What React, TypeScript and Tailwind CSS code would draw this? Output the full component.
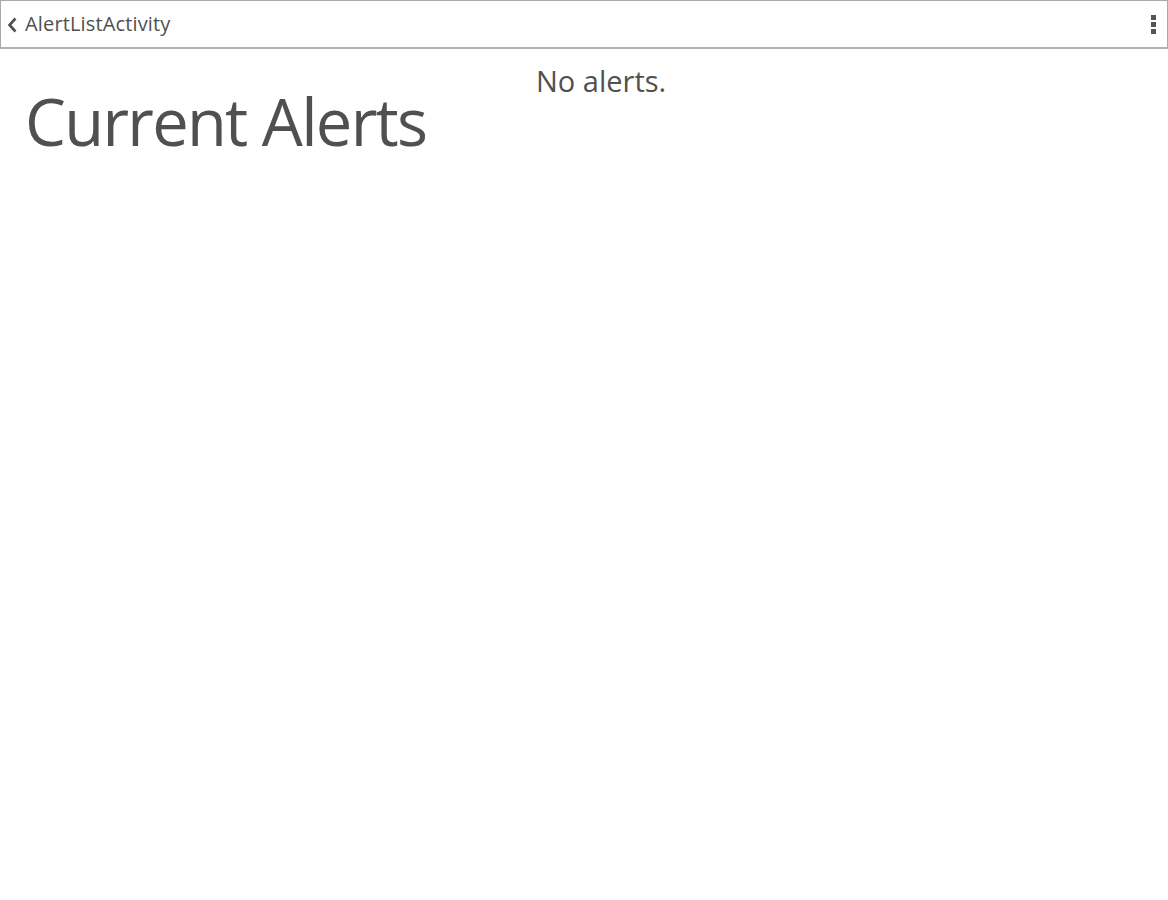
export default function App() {
  return (
    <div
      className="w-[1168px] h-[900px] bg-white text-[#505050] overflow-hidden"
      style={{ fontFamily: '"Open Sans", "Noto Sans", sans-serif' }}
    >
      {/* Action bar */}
      <header className="h-[49px] border border-[#a8a8a8] border-b-2 border-b-[#b0b0b0] flex items-center justify-between pl-[6px] pr-[11px]">
        <div className="flex items-center gap-[7px]">
          <svg width="11" height="16" viewBox="0 0 11 16" className="mt-[1px]">
            <path d="M8.5 1.5 L2.5 8 L8.5 14.5" fill="none" stroke="#505050" strokeWidth="2.6" />
          </svg>
          <span className="text-[20px] leading-none tracking-[0.15px]">AlertListActivity</span>
        </div>
        <div className="flex flex-col gap-[2px]">
          <span className="w-[5px] h-[5px] bg-[#555]" />
          <span className="w-[5px] h-[5px] bg-[#555]" />
          <span className="w-[5px] h-[5px] bg-[#555]" />
        </div>
      </header>

      {/* Content */}
      <div className="flex">
        <h1 className="pl-[25px] pt-[27px] w-[510px] text-[65px] leading-[90px] tracking-[-1.7px]">
          Current Alerts
        </h1>
        <p className="pt-[12px] pl-[26px] text-[29px] leading-[40px]">No alerts.</p>
      </div>
    </div>
  );
}
